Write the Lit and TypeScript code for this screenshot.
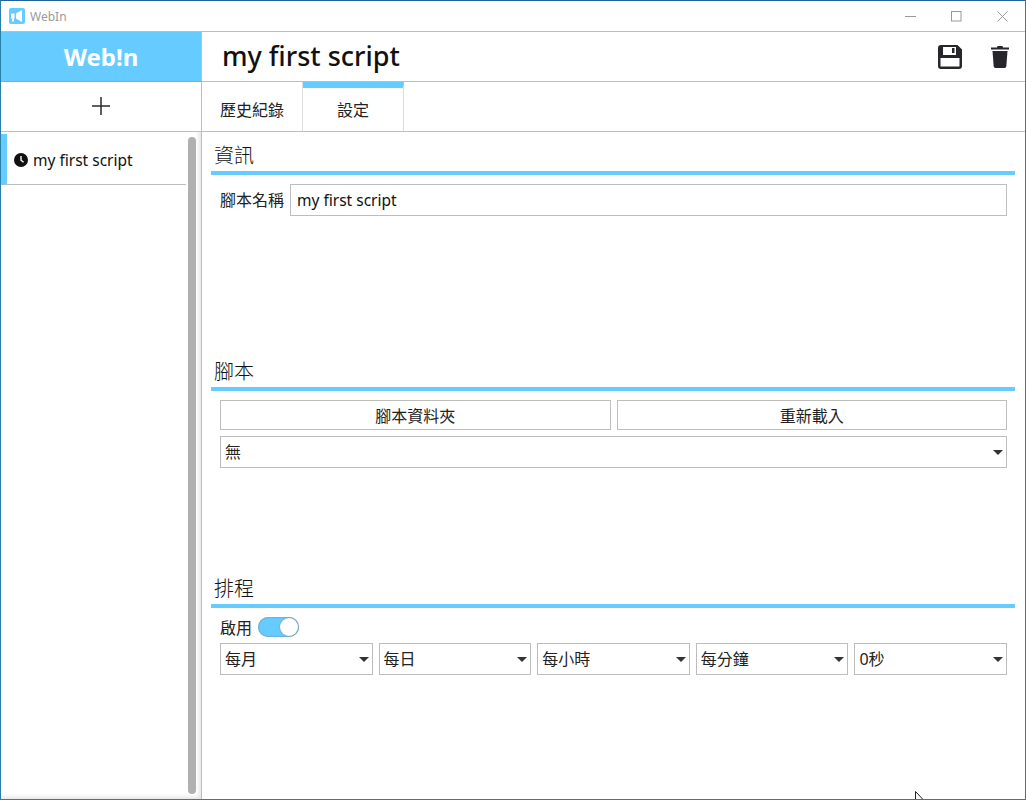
import { LitElement, html, css } from "lit";
import { customElement } from "lit/decorators.js";

@customElement("app-root")
export class AppRoot extends LitElement {
  static styles = css`
    :host { display: block; width: 1026px; height: 800px; font-family: "Noto Sans", "Noto Sans CJK TC", sans-serif; color: #111; }
    * { box-sizing: border-box; }
    .win { position: relative; width: 1026px; height: 800px; border: 1px solid #2b7ea6; border-top-color: #22639a; background: #fff; display: flex; flex-direction: column; overflow: hidden; }
    .titlebar { height: 30px; flex: none; display: flex; align-items: center; }
    .app-ico { margin-left: 8px; width: 16px; height: 16px; flex: none; display: block; }
    .app-name { margin-left: 5px; font-size: 12px; color: #9a9a9a; }
    .ctrls { margin-left: auto; display: flex; }
    .ctrl { width: 46px; height: 30px; display: flex; align-items: center; justify-content: center; }
    .ctrl svg { display: block; }
    .body { flex: 1; display: grid; grid-template-columns: 201px 1fr; grid-template-rows: 51px 50px 1fr; min-height: 0; }
    .brand { background: #66ccff; border-top: 1px solid #bdbdbd; border-bottom: 1px solid #5bb9e8; border-right: 1px solid #bdbdbd; color: #fff; font-weight: 700; font-size: 24px; display: flex; align-items: center; justify-content: center; }
    .header { border-top: 1px solid #bdbdbd; border-bottom: 1px solid #bdbdbd; display: flex; align-items: center; padding: 0 16px 0 20px; }
    .title { font-size: 27px; font-weight: 500; color: #111; flex: 1; line-height: 1; position: relative; top: -1px; }
    .hicons { display: flex; align-items: center; gap: 29px; }
    .hicons svg { display: block; }
    .add { border-right: 1px solid #bdbdbd; border-bottom: 1px solid #bdbdbd; display: flex; align-items: center; justify-content: center; padding-bottom: 2px; }
    .tabs { display: flex; border-bottom: 1px solid #bdbdbd; }
    .tab { width: 101px; border-right: 1px solid #dcdcdc; font-size: 16px; display: flex; align-items: center; justify-content: center; padding-top: 5px; color: #222; }
    .tab.active { border-top: 6px solid #66ccff; padding-top: 0; padding-bottom: 2px; }
    .side { border-right: 1px solid #bdbdbd; box-shadow: inset -4px -4px 4px -2px #e4e4e4; display: flex; min-height: 0; padding-top: 2px; }
    .list { width: 185px; flex: none; }
    .item { height: 51px; border-left: 6px solid #66ccff; border-bottom: 1px solid #bdbdbd; display: flex; align-items: center; padding: 2px 0 0 7px; gap: 5px; font-size: 15.5px; color: #111; }
    .item svg { flex: none; display: block; }
    .scroll { width: 8px; margin: 3px 0 4px 2px; background: #b0b0b0; border-radius: 4px; height: 657px; }
    .main { padding: 0 10px 0 9px; min-height: 0; }
    .sec { height: 216.4px; padding-top: 9px; }
    .sec h2 { margin: 0; font-weight: 300; font-size: 20px; line-height: 30px; height: 30px; padding-left: 3px; color: #111; }
    .bar { height: 4px; background: #66ccff; }
    .row-name { margin: 9px 8px 0 9px; display: flex; align-items: center; gap: 6px; font-size: 16px; }
    .row-name label { width: 64px; flex: none; white-space: nowrap; color: #222; line-height: 30px; height: 30px; }
    input.text { flex: 1; min-width: 0; height: 32px; border: 1px solid #bdbdbd; font: inherit; font-size: 15.5px; padding: 0 6px; color: #111; outline: none; border-radius: 0; background: #fff; }
    .btns { margin: 9px 8px 0 9px; display: grid; grid-template-columns: 1fr 1fr; gap: 6px; }
    button { height: 30px; border: 1px solid #bdbdbd; background: #fff; font: inherit; font-size: 16px; color: #222; padding: 0; border-radius: 0; }
    .sel { position: relative; display: block; height: 32px; min-width: 0; }
    .sel select { appearance: none; -webkit-appearance: none; width: 100%; height: 100%; border: 1px solid #bdbdbd; background: #fff; font: inherit; font-size: 16px; color: #222; padding: 0 4px; border-radius: 0; outline: none; }
    .sel i { position: absolute; right: 4px; top: 14px; width: 0; height: 0; border-left: 5px solid transparent; border-right: 5px solid transparent; border-top: 5px solid #333; }
    .full { margin: 6px 8px 0 9px; }
    .enable { margin: 9px 0 0 9px; display: flex; align-items: center; gap: 6px; font-size: 16px; height: 20px; color: #222; }
    .toggle { position: relative; width: 41px; height: 20px; border-radius: 10px; background: #66ccff; box-shadow: inset 0 0 2px #777; flex: none; }
    .toggle b { position: absolute; right: 1px; top: 1px; width: 18px; height: 18px; border-radius: 50%; background: #fff; box-shadow: 0 0 2px #888; }
    .sels { margin: 6px 8px 0 9px; display: grid; grid-template-columns: repeat(5, 1fr); gap: 6px; }
    .cursor { position: absolute; left: 914px; top: 790px; display: block; }
  `;

  private sel(label: string) {
    return html`<span class="sel"><select><option>${label}</option></select><i></i></span>`;
  }

  render() {
    return html`
      <div class="win">
        <div class="titlebar">
          <svg class="app-ico" viewBox="0 0 16 16">
            <rect width="16" height="16" rx="2" fill="#66ccff"/>
            <path d="M7 5.500 13 2v12L7 10.500z" fill="#fff"/>
            <path d="M2 5.500h3.500v5H2z" fill="#fff"/>
            <path d="M3 10.500h2v3H3z" fill="#fff"/>
          </svg>
          <span class="app-name">WebIn</span>
          <div class="ctrls">
            <span class="ctrl"><svg width="11" height="11"><path d="M0 5.500h11" stroke="#999"/></svg></span>
            <span class="ctrl"><svg width="11" height="11"><rect x=".5" y=".5" width="9.500" height="9.500" fill="none" stroke="#999"/></svg></span>
            <span class="ctrl"><svg width="11" height="11"><path d="M.5.500l10 10M10.500.500l-10 10" stroke="#999" fill="none"/></svg></span>
          </div>
        </div>
        <div class="body">
          <div class="brand">Web!n</div>
          <div class="header">
            <div class="title">my first script</div>
            <div class="hicons">
              <svg width="24" height="24" viewBox="0 0 24 24">
                <path fill-rule="evenodd" fill="#26262b" d="M3 0h16.500L24 4.500V21a3 3 0 0 1-3 3H3a3 3 0 0 1-3-3V3a3 3 0 0 1 3-3zM5 2v8h13V2zM14 3h2.500v5H14zM2.500 13v8.500h19V13z"/>
              </svg>
              <svg width="18" height="22" viewBox="0 0 18 22">
                <path fill="#26262b" d="M6.500 0h5l.5 1.500h6V3.500H0V1.500h6zM1.500 5h15l-1.200 15.500a1.700 1.700 0 0 1-1.700 1.500H4.400a1.700 1.700 0 0 1-1.700-1.500z"/>
              </svg>
            </div>
          </div>
          <div class="add">
            <svg width="18" height="18"><path d="M9 0v18M0 9h18" stroke="#2b2b2b" stroke-width="1.500" fill="none"/></svg>
          </div>
          <div class="tabs">
            <div class="tab">歷史紀錄</div>
            <div class="tab active">設定</div>
          </div>
          <div class="side">
            <div class="list">
              <div class="item">
                <svg width="14" height="14" viewBox="0 0 14 14"><circle cx="7" cy="7" r="7" fill="#111"/><path d="M7 3v4.200l2.600 2" fill="none" stroke="#fff" stroke-width="1.400"/></svg>
                <span>my first script</span>
              </div>
            </div>
            <div class="scroll"></div>
          </div>
          <div class="main">
            <section class="sec">
              <h2>資訊</h2>
              <div class="bar"></div>
              <div class="row-name"><label>腳本名稱</label><input class="text" .value=${"my first script"} /></div>
            </section>
            <section class="sec">
              <h2>腳本</h2>
              <div class="bar"></div>
              <div class="btns"><button>腳本資料夾</button><button>重新載入</button></div>
              <div class="full">${this.sel("無")}</div>
            </section>
            <section class="sec">
              <h2>排程</h2>
              <div class="bar"></div>
              <div class="enable"><span>啟用</span><span class="toggle"><b></b></span></div>
              <div class="sels">
                ${this.sel("每月")}${this.sel("每日")}${this.sel("每小時")}${this.sel("每分鐘")}${this.sel("0秒")}
              </div>
            </section>
          </div>
        </div>
        <svg class="cursor" width="12" height="10" viewBox="0 0 12 10"><path d="M.5.500v9.500M.5.500 9.500 10" fill="#fff" stroke="#222"/></svg>
      </div>
    `;
  }
}
